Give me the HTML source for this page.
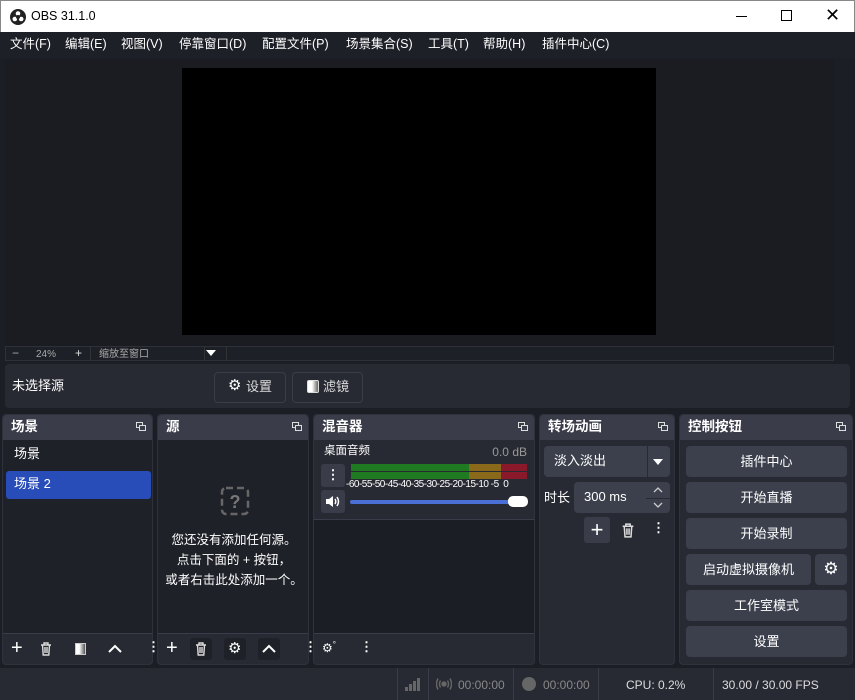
<!DOCTYPE html><html><head><meta charset="utf-8"><style>
*{margin:0;padding:0;box-sizing:border-box}
body{width:855px;height:700px;overflow:hidden;background:#1c1e25;font-family:"Liberation Sans","Noto Sans CJK SC",sans-serif;color:#fff;font-size:13px;position:relative;line-height:1.2}
.a{position:absolute}
.title{left:0;top:0;width:855px;height:32px;background:#fff;color:#000;border:1px solid #888;border-bottom:none}
.menu{left:0;top:32px;width:855px;height:26px;background:#1e2028;font-size:12.5px}
.menu span{position:absolute;top:5px}
.dock{background:#272a33;border-radius:4px;border:1px solid #2f323c}
.hd{position:absolute;left:0;top:0;right:0;height:25px;background:#3a3d49;border-radius:4px 4px 0 0;font-weight:bold;font-size:13.5px;padding:0 8px;line-height:23px}
.fl{position:absolute;right:6px;top:7px;width:10px;height:9px}
.btn{position:absolute;background:#3c404d;border-radius:4px;text-align:center;font-size:13px}
.ft{position:absolute;left:0;right:0;bottom:0;height:31px;border-top:1px solid #3a3d49}
.ic{position:absolute}
</style></head><body>
<div class="a title">
<svg class="ic" style="left:9px;top:8px" width="16" height="16" viewBox="0 0 16 16"><circle cx="8" cy="8" r="8" fill="#222"/><circle cx="8" cy="4.5" r="2.3" fill="#fff"/><circle cx="4.8" cy="10" r="2.3" fill="#fff"/><circle cx="11.2" cy="10" r="2.3" fill="#fff"/><circle cx="8" cy="8" r="2" fill="#222"/></svg>
<span class="a" style="left:30px;top:8px;font-size:12.5px">OBS 31.1.0</span>
<div class="a" style="left:735px;top:15px;width:11px;height:1px;background:#000"></div>
<div class="a" style="left:780px;top:9px;width:11px;height:11px;border:1px solid #000"></div>
<span class="a" style="left:824px;top:4px;font-size:18px;font-weight:300">✕</span>
</div>
<div class="a menu"><span style="left:10px">文件(F)</span><span style="left:65px">编辑(E)</span><span style="left:121px">视图(V)</span><span style="left:179px">停靠窗口(D)</span><span style="left:262px">配置文件(P)</span><span style="left:346px">场景集合(S)</span><span style="left:428px">工具(T)</span><span style="left:483px">帮助(H)</span><span style="left:542px">插件中心(C)</span></div>
<div class="a" style="left:5px;top:60px;width:829px;height:286px;background:#1a1c22"></div>
<div class="a" style="left:182px;top:68px;width:474px;height:267px;background:#000"></div>
<div class="a" style="left:5px;top:346px;width:829px;height:15px;background:#1e2028;border:1px solid #2e313a;font-size:10px;color:#aaa;line-height:13px">
<span class="a" style="left:6px;top:0;font-size:12px">−</span><span class="a" style="left:30px;top:1px">24%</span><span class="a" style="left:69px;top:0;color:#ddd;font-size:12px">+</span><div class="a" style="left:84px;top:0;width:1px;height:13px;background:#333"></div><span class="a" style="left:93px;top:1px">缩放至窗口</span><div class="a" style="left:198px;top:0;width:1px;height:13px;background:#333"></div><div class="a" style="left:200px;top:3px;border-left:5px solid transparent;border-right:5px solid transparent;border-top:6px solid #fff"></div><div class="a" style="left:220px;top:0;width:1px;height:13px;background:#333"></div></div>
<div class="a" style="left:5px;top:364px;width:845px;height:44px;background:#272a33;border-radius:4px"></div>
<span class="a" style="left:12px;top:378px">未选择源</span>
<div class="a" style="left:214px;top:372px;width:72px;height:31px;border:1px solid #3a3d49;border-radius:4px"></div>
<span class="a" style="left:228px;top:377px;font-size:15px">⚙</span><span class="a" style="left:246px;top:379px;color:#ddd">设置</span>
<div class="a" style="left:292px;top:372px;width:71px;height:31px;border:1px solid #3a3d49;border-radius:4px"></div>
<div class="a" style="left:307px;top:380px;width:12px;height:13px;border:1px solid #ddd;border-radius:2px;background:linear-gradient(90deg,#fff 40%,#666)"></div><span class="a" style="left:323px;top:379px;color:#ddd">滤镜</span>

<!-- scenes -->
<div class="a dock" style="left:2px;top:414px;width:151px;height:251px"><div class="hd">场景<svg class="fl" viewBox="0 0 10 9"><rect x=".5" y=".5" width="6" height="5" fill="none" stroke="#ddd"/><rect x="3.5" y="3.5" width="6" height="5" fill="#3a3d49" stroke="#ddd"/></svg></div>
<div class="a" style="left:0;top:25px;right:0;bottom:31px;background:#1f2129"></div>
<span class="a" style="left:11px;top:31px">场景</span>
<div class="a" style="left:3px;top:56px;width:145px;height:28px;background:#284cb8;border-radius:3px"></div><span class="a" style="left:11px;top:61px">场景 2</span>
<div class="ft"><span class="a" style="left:8px;top:2px;font-size:20px">+</span>
<svg class="ic" style="left:37px;top:8px" width="12" height="14" viewBox="0 0 12 14" fill="none" stroke="#ddd" stroke-width="1.4"><path d="M1 3h10M4 3V1h4v2M2.5 3l.7 10h5.6l.7-10M5 5v6M7 5v6"/></svg>
<div class="a" style="left:72px;top:9px;width:11px;height:12px;border:1px solid #ccc;background:linear-gradient(90deg,#fff 35%,#555)"></div>
<svg class="ic" style="left:105px;top:10px" width="14" height="9"><path d="M1 8l6-6 6 6" fill="none" stroke="#fff" stroke-width="2"/></svg>
<span class="a" style="left:144px;top:5px;font-weight:bold">⋮</span></div></div>

<!-- sources -->
<div class="a dock" style="left:157px;top:414px;width:152px;height:251px"><div class="hd">源<svg class="fl" viewBox="0 0 10 9"><rect x=".5" y=".5" width="6" height="5" fill="none" stroke="#ddd"/><rect x="3.5" y="3.5" width="6" height="5" fill="#3a3d49" stroke="#ddd"/></svg></div>
<div class="a" style="left:0;top:25px;right:0;bottom:31px;background:#1f2129"></div>
<svg class="ic" style="left:62px;top:71px" width="30" height="30" viewBox="0 0 30 30"><rect x="2" y="2" width="26" height="26" rx="4" fill="none" stroke="#666" stroke-width="2.5" stroke-dasharray="7 4"/><text x="15" y="22" fill="#777" font-size="18" font-weight="bold" text-anchor="middle" font-family="Liberation Sans">?</text></svg>
<div class="a" style="left:0;width:152px;top:115px;text-align:center;line-height:20px;font-size:12.5px">您还没有添加任何源。<br>点击下面的 + 按钮，<br>或者右击此处添加一个。</div>
<div class="ft"><span class="a" style="left:8px;top:2px;font-size:20px">+</span>
<div class="a" style="left:32px;top:4px;width:22px;height:22px;background:#1f2129;border-radius:3px"></div>
<svg class="ic" style="left:37px;top:8px" width="12" height="14" viewBox="0 0 12 14" fill="none" stroke="#ddd" stroke-width="1.4"><path d="M1 3h10M4 3V1h4v2M2.5 3l.7 10h5.6l.7-10M5 5v6M7 5v6"/></svg>
<div class="a" style="left:66px;top:4px;width:22px;height:22px;background:#1f2129;border-radius:3px"></div><span class="a" style="left:70px;top:6px;font-size:15px">⚙</span>
<div class="a" style="left:100px;top:4px;width:22px;height:22px;background:#1f2129;border-radius:3px"></div>
<svg class="ic" style="left:104px;top:10px" width="14" height="9"><path d="M1 8l6-6 6 6" fill="none" stroke="#fff" stroke-width="2"/></svg>
<span class="a" style="left:146px;top:5px;font-weight:bold">⋮</span></div></div>

<!-- mixer -->
<div class="a dock" style="left:313px;top:414px;width:222px;height:251px"><div class="hd">混音器<svg class="fl" viewBox="0 0 10 9"><rect x=".5" y=".5" width="6" height="5" fill="none" stroke="#ddd"/><rect x="3.5" y="3.5" width="6" height="5" fill="#3a3d49" stroke="#ddd"/></svg></div>
<div class="a" style="left:0;top:104px;right:0;bottom:31px;background:#1c1e25;border-top:1px solid #3a3d49"></div>
<span class="a" style="left:10px;top:30px;font-size:11.5px">桌面音频</span><span class="a" style="right:7px;top:30px;font-size:12px;color:#999">0.0 dB</span>
<div class="a" style="left:7px;top:49px;width:24px;height:23px;background:#3a3d49;border-radius:3px;text-align:center;font-weight:bold;line-height:22px">⋮</div>
<div class="a" style="left:37px;top:49px;width:118px;height:7px;background:#1f7a22"></div><div class="a" style="left:155px;top:49px;width:32px;height:7px;background:#8a6a1a"></div><div class="a" style="left:187px;top:49px;width:26px;height:7px;background:#8a1a2a"></div>
<div class="a" style="left:37px;top:57px;width:118px;height:7px;background:#1f7a22"></div><div class="a" style="left:155px;top:57px;width:32px;height:7px;background:#8a6a1a"></div><div class="a" style="left:187px;top:57px;width:26px;height:7px;background:#8a1a2a"></div>
<span class="a" style="left:32px;top:64px;font-size:10px;letter-spacing:-0.5px;white-space:nowrap">-60-55-50-45-40-35-30-25-20-15-10 -5 &nbsp;0</span>
<div class="a" style="left:7px;top:75px;width:24px;height:23px;background:#3a3d49;border-radius:3px"></div>
<svg class="ic" style="left:11px;top:80px" width="16" height="13" viewBox="0 0 16 13"><path d="M1 4h3l4-3v11l-4-3H1z" fill="#fff"/><path d="M10 4q1.5 2.5 0 5M12 2q3 4.5 0 9" stroke="#fff" stroke-width="1.5" fill="none"/></svg>
<div class="a" style="left:36px;top:85px;width:168px;height:4px;background:#4a6fd6;border-radius:2px"></div>
<div class="a" style="left:194px;top:81px;width:20px;height:11px;background:#fff;border-radius:5px"></div>
<div class="ft"><span class="a" style="left:8px;top:6px;font-size:12px">⚙<sup style="font-size:8px">°</sup></span><span class="a" style="left:46px;top:5px;font-weight:bold">⋮</span></div></div>

<!-- transitions -->
<div class="a dock" style="left:539px;top:414px;width:136px;height:251px"><div class="hd">转场动画<svg class="fl" viewBox="0 0 10 9"><rect x=".5" y=".5" width="6" height="5" fill="none" stroke="#ddd"/><rect x="3.5" y="3.5" width="6" height="5" fill="#3a3d49" stroke="#ddd"/></svg></div>
<div class="btn" style="left:4px;top:31px;width:126px;height:31px;text-align:left;padding:0 10px;line-height:30px">淡入淡出</div>
<div class="a" style="left:107px;top:31px;width:1px;height:31px;background:#272a33"></div>
<div class="a" style="left:113px;top:44px;border-left:5px solid transparent;border-right:5px solid transparent;border-top:6px solid #fff"></div>
<span class="a" style="left:4px;top:75px">时长</span>
<div class="btn" style="left:34px;top:67px;width:96px;height:31px;text-align:left;padding:0 10px;line-height:30px">300 ms</div>
<div class="a" style="left:106px;top:83px;width:24px;height:1px;background:#272a33"></div>
<svg class="ic" style="left:113px;top:71px" width="10" height="24" fill="none" stroke="#ccc" stroke-width="1.3"><path d="M1 6l4-4 4 4M1 17l4 4 4-4"/></svg>
<div class="a" style="left:44px;top:102px;width:26px;height:26px;background:#3a3d49;border-radius:3px;text-align:center;font-size:22px;line-height:25px">+</div>
<svg class="ic" style="left:81px;top:108px" width="14" height="15" viewBox="0 0 12 14" fill="none" stroke="#ddd" stroke-width="1.4"><path d="M1 3h10M4 3V1h4v2M2.5 3l.7 10h5.6l.7-10M5 5v6M7 5v6"/></svg>
<span class="a" style="left:112px;top:105px;font-weight:bold">⋮</span></div>

<!-- controls -->
<div class="a dock" style="left:679px;top:414px;width:174px;height:251px"><div class="hd">控制按钮<svg class="fl" viewBox="0 0 10 9"><rect x=".5" y=".5" width="6" height="5" fill="none" stroke="#ddd"/><rect x="3.5" y="3.5" width="6" height="5" fill="#3a3d49" stroke="#ddd"/></svg></div>
<div class="btn" style="left:6px;top:31px;width:161px;height:31px;line-height:31px">插件中心</div>
<div class="btn" style="left:6px;top:67px;width:161px;height:31px;line-height:31px">开始直播</div>
<div class="btn" style="left:6px;top:103px;width:161px;height:31px;line-height:31px">开始录制</div>
<div class="btn" style="left:6px;top:139px;width:125px;height:31px;line-height:31px">启动虚拟摄像机</div>
<div class="btn" style="left:135px;top:139px;width:32px;height:31px;line-height:30px;font-size:17px">⚙</div>
<div class="btn" style="left:6px;top:175px;width:161px;height:31px;line-height:31px">工作室模式</div>
<div class="btn" style="left:6px;top:211px;width:161px;height:31px;line-height:31px">设置</div></div>

<!-- status -->
<div class="a" style="left:0;top:668px;width:855px;height:32px;background:#272a33;font-size:12px;color:#888">
<div class="a" style="left:397px;top:0;width:1px;height:32px;background:#3a3d49"></div>
<svg class="ic" style="left:405px;top:9px" width="16" height="14"><rect x="0" y="10" width="3" height="4" fill="#666"/><rect x="4" y="7" width="3" height="7" fill="#666"/><rect x="8" y="4" width="3" height="10" fill="#666"/><rect x="12" y="1" width="3" height="13" fill="#666"/></svg>
<div class="a" style="left:428px;top:0;width:1px;height:32px;background:#3a3d49"></div>
<svg class="ic" style="left:436px;top:9px" width="16" height="14" fill="none" stroke="#666" stroke-width="1.4"><circle cx="8" cy="7" r="2" fill="#666"/><path d="M4.5 3.5q-2 3.5 0 7M11.5 3.5q2 3.5 0 7M2 1.5q-3 5.5 0 11M14 1.5q3 5.5 0 11"/></svg>
<span class="a" style="left:458px;top:10px">00:00:00</span>
<div class="a" style="left:513px;top:0;width:1px;height:32px;background:#3a3d49"></div>
<div class="a" style="left:522px;top:9px;width:14px;height:14px;border-radius:50%;background:#666"></div><span class="a" style="left:543px;top:10px">00:00:00</span>
<div class="a" style="left:598px;top:0;width:1px;height:32px;background:#3a3d49"></div>
<span class="a" style="left:626px;top:10px;color:#ddd">CPU: 0.2%</span>
<div class="a" style="left:713px;top:0;width:1px;height:32px;background:#3a3d49"></div>
<span class="a" style="left:722px;top:10px;color:#ddd">30.00 / 30.00 FPS</span></div>
</body></html>
